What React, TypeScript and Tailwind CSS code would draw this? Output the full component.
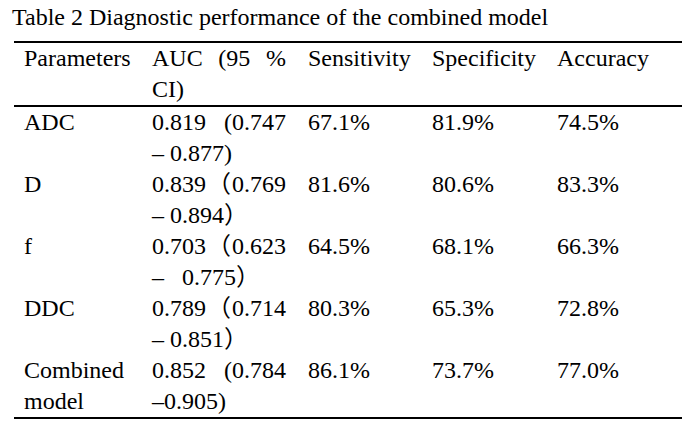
const rows = [
  { name: ["ADC"], auc: ["0.819 (0.747", "\u2013 0.877)"], sens: "67.1%", spec: "81.9%", acc: "74.5%" },
  { name: ["D"], auc: ["0.839\uff080.769", "\u2013 0.894\uff09"], sens: "81.6%", spec: "80.6%", acc: "83.3%" },
  { name: ["f"], auc: ["0.703\uff080.623", "\u2013\u00a0\u00a0 0.775\uff09"], sens: "64.5%", spec: "68.1%", acc: "66.3%" },
  { name: ["DDC"], auc: ["0.789\uff080.714", "\u2013 0.851\uff09"], sens: "80.3%", spec: "65.3%", acc: "72.8%" },
  { name: ["Combined", "model"], auc: ["0.852 (0.784", "\u20130.905)"], sens: "86.1%", spec: "73.7%", acc: "77.0%" },
];

const grid = "grid grid-cols-[128px_156px_124px_125px_135px]";

function AucCell({ lines }: { lines: string[] }) {
  return (
    <div className="pl-[10px] pr-[12px]">
      <div className="text-justify [text-align-last:justify]">{lines[0]}</div>
      <div>{lines[1]}</div>
    </div>
  );
}

export default function App() {
  return (
    <div
      className="w-[697px] h-[421px] bg-white text-black text-[24px] leading-[31px] overflow-hidden"
      style={{ fontFamily: '"Liberation Serif", "Noto Sans CJK SC", serif' }}
    >
      <div className="pl-[12px] pt-[2px] h-[41px]">Table 2 Diagnostic performance of the combined model</div>

      <div className="ml-[14px] w-[668px] border-t-2 border-b-2 border-black">
        {/* Header */}
        <div className={`${grid} border-b-2 border-black`}>
          <div className="pl-[10px]">Parameters</div>
          <AucCell lines={["AUC (95 %", "CI)"]} />
          <div className="pl-[10px]">Sensitivity</div>
          <div className="pl-[10px]">Specificity</div>
          <div className="pl-[10px]">Accuracy</div>
        </div>

        {rows.map((r) => (
          <div key={r.name.join(" ")} className={grid}>
            <div className="pl-[10px]">
              {r.name.map((n) => (
                <div key={n}>{n}</div>
              ))}
            </div>
            <AucCell lines={r.auc} />
            <div className="pl-[10px]">{r.sens}</div>
            <div className="pl-[10px]">{r.spec}</div>
            <div className="pl-[10px]">{r.acc}</div>
          </div>
        ))}
      </div>
    </div>
  );
}
